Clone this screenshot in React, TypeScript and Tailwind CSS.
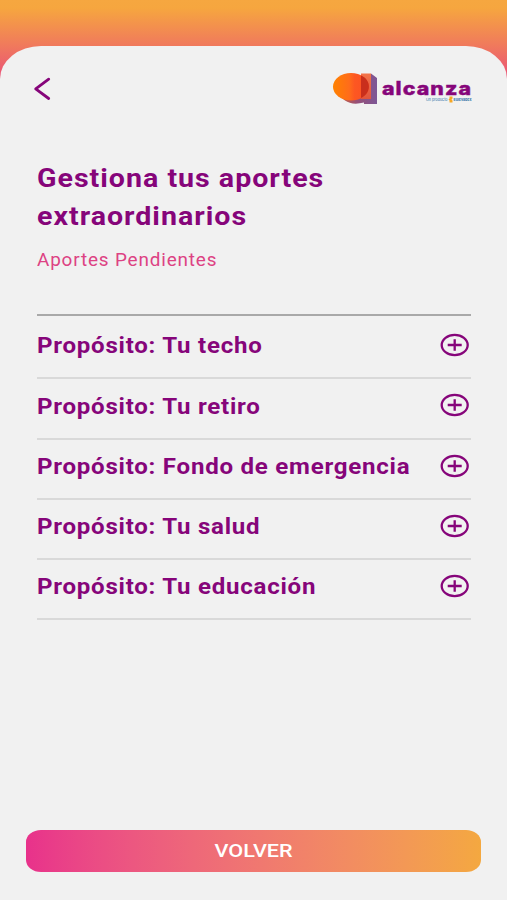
const purposes = [
  "Tu techo",
  "Tu retiro",
  "Fondo de emergencia",
  "Tu salud",
  "Tu educación",
]

const Logo = () => (
  <svg width="142" height="36" viewBox="0 0 142 36" aria-label="alcanza">
    <defs>
      <linearGradient id="face" x1="0" x2="1">
        <stop offset="0" stopColor="#ff8200" />
        <stop offset="0.45" stopColor="#ff6c1a" />
        <stop offset="0.6" stopColor="#fd5722" />
        <stop offset="1" stopColor="#fb4f22" />
      </linearGradient>
      <linearGradient id="side" x1="0" x2="1">
        <stop offset="0" stopColor="#d0603c" />
        <stop offset="0.5" stopColor="#955078" />
        <stop offset="1" stopColor="#7d5796" />
      </linearGradient>
      <linearGradient id="stem" x1="0" y1="0" x2="0" y2="1">
        <stop offset="0" stopColor="#f3744a" />
        <stop offset="1" stopColor="#e0543c" />
      </linearGradient>
    </defs>
    <path d="M6 24 L13 29.500 Q20 34.500 32 31.500 V33 H45 V7 L39 2.500 L30 20 Z" fill="url(#side)" />
    <rect x="29" y="2.500" width="10" height="25.500" fill="url(#stem)" />
    <ellipse cx="19" cy="15.700" rx="18" ry="13.700" fill="url(#face)" />
    <path d="M29 4.500 C39.500 9 39.500 22 29 27 Z" fill="#c92f1c" />
    <text
      x="50"
      y="23.700"
      textLength="90"
      lengthAdjust="spacingAndGlyphs"
      fontFamily="Inter, sans-serif"
      fontSize="18.500"
      fontWeight="800"
      letterSpacing="0.900"
      fill="#86057a"
      stroke="#86057a"
      strokeWidth="0.400"
    >
      alcanza
    </text>
    <text x="94" y="30" textLength="21.500" lengthAdjust="spacingAndGlyphs" fontFamily="Inter, sans-serif" fontSize="3.800" fill="#2f74a8">
      Un producto
    </text>
    <path d="M117.500 25.500h3v2l-1 1 1 1v2h-3v-2l-1-1 1-1z" fill="#f7a823" />
    <text x="121.500" y="30.300" textLength="18" lengthAdjust="spacingAndGlyphs" fontFamily="Inter, sans-serif" fontSize="3.800" fontWeight="700" fill="#2f74a8">
      Eulevadex
    </text>
  </svg>
)

const PlusIcon = () => (
  <svg width="30" height="24" viewBox="0 0 30 24" fill="none" stroke="#86057a">
    <ellipse cx="14.700" cy="12" rx="13" ry="10.200" strokeWidth="2.300" />
    <path d="M7.700 12h14M14.700 6.300v11.400" strokeWidth="2.300" />
  </svg>
)

const App = () => {
  return (
    <div className="h-[900px] w-[507px] overflow-hidden bg-[linear-gradient(to_bottom,#f6a740_0px,#f6a63f_8px,#f07a5c_45px,#ea5575_75px)] pt-[45.500px] font-[Roboto,sans-serif]">
      <div className="flex h-[854.500px] flex-col rounded-t-[41px_33px] bg-[#f1f1f1] px-[26px]">
        <header className="flex items-start justify-between pt-[25.500px] pr-[7px] pl-[7px]">
          <button className="mt-[6px]" aria-label="Volver">
            <svg
              width="19"
              height="24"
              viewBox="0 0 19 24"
              fill="none"
              stroke="#86057a"
              strokeWidth="2.800"
              strokeLinecap="round"
              strokeLinejoin="round"
            >
              <path d="M15.700 2.200 L2.700 11.900 L15.700 21.500" />
            </svg>
          </button>
          <Logo />
        </header>
        <main className="flex-1 px-[10.500px] pt-[52px]">
          <h1 className="w-[400px] origin-left scale-x-[1.1] text-[26px] leading-[38px] font-bold tracking-[0.9px] text-[#86057a]">
            Gestiona tus aportes
            <br />
            extraordinarios
          </h1>
          <p className="mt-[13px] w-[300px] origin-left scale-x-[1.05] text-lg leading-6 tracking-[0.8px] text-[#dd4283]">
            Aportes Pendientes
          </p>
          <ul className="mt-[42px] border-t-2 border-[#a9a9a9] pt-[3px]">
            {purposes.map((purpose) => (
              <li
                key={purpose}
                className="flex h-[60.250px] items-center justify-between border-b-2 border-[#d9d9d9] pr-px pb-[6px]"
              >
                <span className="w-[340px] origin-left scale-x-[1.07] pt-[2px] text-[22.500px] font-bold tracking-[0.7px] whitespace-nowrap text-[#86057a]">
                  Propósito: {purpose}
                </span>
                <PlusIcon />
              </li>
            ))}
          </ul>
        </main>
        <button className="mb-7 h-[42px] rounded-[15px_/_12px] bg-linear-to-r from-[#e8318b] to-[#f4a840] text-white">
          <span className="inline-block scale-x-[1.2] text-lg leading-6 font-medium">VOLVER</span>
        </button>
      </div>
    </div>
  )
}

export default App
